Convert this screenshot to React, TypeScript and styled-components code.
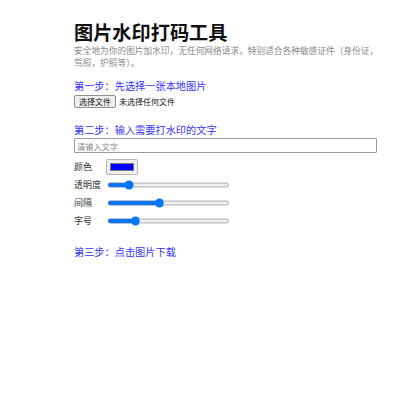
import React, { useState } from "react";
import styled, { createGlobalStyle } from "styled-components";

const GlobalStyle = createGlobalStyle`
  html, body {
    margin: 0;
    padding: 0;
    background: #fff;
  }
  body {
    font-family: "Noto Sans CJK SC", "Noto Sans", sans-serif;
    color: #333;
  }
`;

const Page = styled.div`
  width: 303px;
  padding: 21px 0 0 74px;
`;

const Title = styled.h1`
  margin: 0;
  font-size: 19.2px;
  line-height: 22px;
  font-weight: 700;
  color: #111;
`;

const Intro = styled.p`
  width: 306px;
  margin: 2px 0 0;
  font-size: 8.7px;
  line-height: 12px;
  color: #8a8a8a;
`;

const Step = styled.h3<{ $gap: number }>`
  margin: ${(p) => p.$gap}px 0 0;
  font-size: 10.2px;
  line-height: 14px;
  font-weight: 400;
  color: #3434f6;
`;

const FileRow = styled.div`
  display: flex;
  align-items: center;
  gap: 3px;
  margin-top: 2px;
  font-size: 8px;
  line-height: 12px;
  color: #111;

  input {
    display: none;
  }
`;

const FileButton = styled.label`
  display: inline-flex;
  align-items: center;
  height: 13px;
  box-sizing: border-box;
  padding: 0 4px;
  background: #efefef;
  border: 1px solid #8f8f8f;
  border-radius: 2px;
  font-size: 8px;
  color: #111;
`;

const TextBox = styled.input`
  display: block;
  box-sizing: border-box;
  width: 303px;
  height: 15px;
  margin-top: 1px;
  padding: 0 2px;
  border: 1px solid #9a9a9a;
  border-radius: 1px;
  font-family: inherit;
  font-size: 8.2px;
  outline: none;

  &::placeholder {
    color: #8a8a8a;
  }
`;

const Controls = styled.div`
  margin-top: 5px;
  display: flex;
  flex-direction: column;
`;

const Row = styled.div`
  display: flex;
  align-items: center;
  height: 18px;
`;

const Label = styled.span`
  width: 33px;
  font-size: 9px;
  line-height: 12px;
  color: #333;
`;

const ColorPick = styled.input`
  zoom: 0.6;
  margin: 0 0 0 -1px;
  width: 52px;
  height: 28px;
  padding: 1px 2px;
  border: 1px solid #b5b5b5;
  border-radius: 2px;
  background: #efefef;
`;

const Slider = styled.input`
  zoom: 0.6;
  width: 205px;
  margin: 0;
  accent-color: #0075ff;
`;

const sliders = [
  { name: "透明度", value: 15 },
  { name: "间隔", value: 42 },
  { name: "字号", value: 21 },
];

export default function App() {
  const [color, setColor] = useState("#0000ff");
  const [values, setValues] = useState(sliders.map((s) => s.value));
  const [fileName, setFileName] = useState("");

  return (
    <Page>
      <GlobalStyle />
      <Title>图片水印打码工具</Title>
      <Intro>安全地为你的图片加水印，无任何网络请求，特别适合各种敏感证件（身份证，驾照，护照等）。</Intro>

      <Step $gap={10}>第一步：先选择一张本地图片</Step>
      <FileRow>
        <FileButton>
          选择文件
          <input
            type="file"
            accept="image/*"
            onChange={(e) => setFileName(e.target.files?.[0]?.name ?? "")}
          />
        </FileButton>
        <span>{fileName || "未选择任何文件"}</span>
      </FileRow>

      <Step $gap={15}>第二步：输入需要打水印的文字</Step>
      <TextBox type="text" placeholder="请输入文字" />

      <Controls>
        <Row>
          <Label>颜色</Label>
          <ColorPick type="color" value={color} onChange={(e) => setColor(e.target.value)} />
        </Row>
        {sliders.map((s, i) => (
          <Row key={s.name}>
            <Label>{s.name}</Label>
            <Slider
              type="range"
              min={0}
              max={100}
              value={values[i]}
              onChange={(e) => {
                const next = [...values];
                next[i] = Number(e.target.value);
                setValues(next);
              }}
            />
          </Row>
        ))}
      </Controls>

      <Step $gap={15}>第三步：点击图片下载</Step>
    </Page>
  );
}
